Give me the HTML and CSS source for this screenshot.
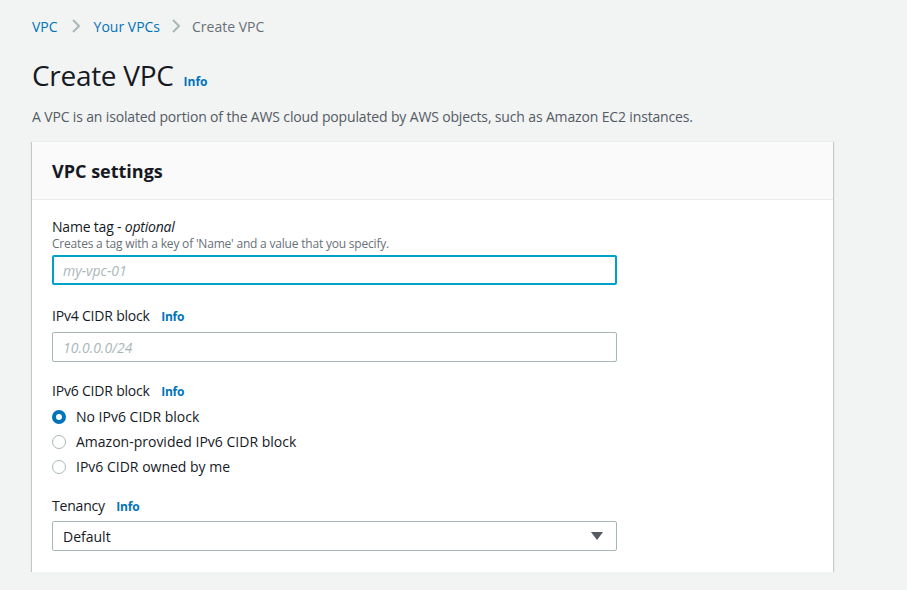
FILE: index.html
```html
<!DOCTYPE html>
<html>
<head>
<meta charset="utf-8">
<link rel="stylesheet" href="styles.css">
</head>
<body>
<div class="page">
  <nav class="crumbs">
    <a class="crumb-link">VPC</a>
    <svg class="chev" width="8" height="14" viewBox="0 0 8 14"><path d="M1 1l6 6-6 6" fill="none" stroke="#aab7b8" stroke-width="2"/></svg>
    <a class="crumb-link">Your VPCs</a>
    <svg class="chev chev-2" width="8" height="14" viewBox="0 0 8 14"><path d="M1 1l6 6-6 6" fill="none" stroke="#aab7b8" stroke-width="2"/></svg>
    <span class="crumb-current">Create VPC</span>
  </nav>
  <div class="title-row">
    <h1 class="title">Create VPC</h1>
    <span class="info info-title">Info</span>
  </div>
  <p class="desc">A VPC is an isolated portion of the AWS cloud populated by AWS objects, such as Amazon EC2 instances.</p>

  <section class="card">
    <header class="card-head">VPC settings</header>
    <div class="card-body">
      <div class="field f-name">
        <div class="label">Name tag - <i>optional</i></div>
        <div class="hint">Creates a tag with a key of 'Name' and a value that you specify.</div>
        <div class="input focus"><span class="ph">my-vpc-01</span></div>
      </div>
      <div class="field f-ipv4">
        <div class="label">IPv4 CIDR block <span class="info">Info</span></div>
        <div class="input"><span class="ph">10.0.0.0/24</span></div>
      </div>
      <div class="field f-ipv6">
        <div class="label">IPv6 CIDR block <span class="info">Info</span></div>
        <div class="radios">
          <div class="radio-row"><span class="radio checked"></span>No IPv6 CIDR block</div>
          <div class="radio-row"><span class="radio"></span>Amazon-provided IPv6 CIDR block</div>
          <div class="radio-row"><span class="radio"></span>IPv6 CIDR owned by me</div>
        </div>
      </div>
      <div class="field f-tenancy">
        <div class="label">Tenancy <span class="info">Info</span></div>
        <div class="input select"><span class="val">Default</span>
          <svg width="12" height="9" viewBox="0 0 12 9"><path d="M0 0h12L6 8z" fill="#545b64"/></svg>
        </div>
      </div>
    </div>
  </section>
</div>
</body>
</html>
```
FILE: styles.css
```css
* { box-sizing: border-box; }
html, body { margin: 0; padding: 0; }
body {
  background: #f2f3f3;
  font-family: "Open Sans", "Noto Sans", sans-serif;
  color: #16191f;
  font-size: 14px;
}
.page { padding: 15px 32px 0 32px; width: 907px; }
.crumbs { display: flex; align-items: center; height: 22px; }
.crumb-link { color: #0073bb; font-size: 14px; }
.chev { margin: 0 14px 0 14px; }
.chev-2 { margin: 0 12px 0 12px; }
.crumb-current { color: #687078; font-size: 14px; }
.title-row { display: flex; align-items: baseline; margin-top: 18px; height: 40px; }
.title { margin: 0; font-size: 28px; font-weight: 400; line-height: 40px; letter-spacing: -0.3px; }
.info { color: #0073bb; font-weight: 700; font-size: 12px; margin-left: 8px; }
.info-title { margin-left: 10px; }
.desc { margin: 12px 0 0 0; font-size: 14px; line-height: 20px; color: #545b64; letter-spacing: -0.15px; }
.card {
  margin-top: 14px;
  width: 801px;
  background: #fff;
  box-shadow: 0 1px 1px 0 rgba(0,28,36,0.3), 1px 1px 1px 0 rgba(0,28,36,0.15), -1px 1px 1px 0 rgba(0,28,36,0.15);
  border-top: 1px solid #eaeded;
}
.card-head {
  background: #fafafa;
  border-bottom: 1px solid #eaeded;
  height: 58px;
  padding: 0 20px;
  display: flex; align-items: center;
  font-size: 18px; font-weight: 700;
}
.card-body { padding: 17px 20px 21px 20px; }
.f-name { margin-bottom: 21px; }
.f-ipv4 { margin-bottom: 19px; }
.f-ipv6 { margin-bottom: 17px; }
.label { font-size: 14px; line-height: 20px; letter-spacing: -0.2px; }
.hint { font-size: 12px; line-height: 16px; color: #687078; margin-top: -1px; letter-spacing: -0.2px; }
.input {
  width: 565px; height: 30px;
  border: 1px solid #aab7b8; border-radius: 2px;
  display: flex; align-items: center;
  padding: 0 10px;
  margin-top: 5px;
}
.input.focus { border: 2px solid #00a1c9; padding: 0 9px; margin-top: 3px; }
.ph { color: #aab7b8; font-style: italic; }
.radios { margin-top: 2px; }
.radio-row { display: flex; align-items: center; height: 25px; }
.radio {
  width: 14px; height: 14px; border-radius: 50%;
  border: 1px solid #aab7b8; margin-right: 10px;
  background: #fff;
}
.radio.checked { border: 4px solid #0073bb; }
.select { justify-content: space-between; padding: 0 13px 0 10px; margin-top: 4px; }
.val { color: #16191f; }
```
